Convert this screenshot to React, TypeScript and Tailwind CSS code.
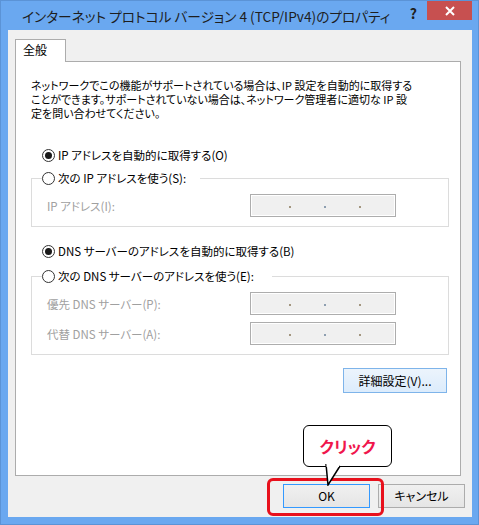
import type { ReactNode } from 'react';

const font = "font-['Noto_Sans_CJK_JP','Noto_Sans',sans-serif] [font-feature-settings:'palt']";

function Radio({ checked, children }: { checked?: boolean; children: ReactNode }) {
  return (
    <div className="flex h-[14px] items-center">
      <span className="flex h-[13px] w-[13px] items-center justify-center rounded-full border border-[#333] bg-white">
        {checked && <span className="h-[7px] w-[7px] rounded-full bg-[#1a1a1a]" />}
      </span>
      <span className="ml-[3px] whitespace-nowrap text-[11.5px] leading-[14px] text-black">{children}</span>
    </div>
  );
}

function IpBox() {
  return (
    <div className="relative h-[23px] w-[146px] border border-[#adadad] bg-[#f0f0f0] shadow-[inset_0_0_0_1px_#fff]">
      <div className="flex h-full items-center pl-[38px] pt-[2px]">
        <span className="h-[2px] w-[2px] bg-[#a39680]" />
        <span className="ml-[33px] h-[2px] w-[2px] bg-[#8d9eb0]" />
        <span className="ml-[33px] h-[2px] w-[2px] bg-[#a39680]" />
      </div>
    </div>
  );
}

function Field({ label }: { label: string }) {
  return (
    <div className="flex items-center pl-[15px]">
      <span className="w-[203px] whitespace-nowrap text-[11.5px] leading-[14px] text-[#a0a0a0]">{label}</span>
      <IpBox />
    </div>
  );
}

export default function App() {
  return (
    <div className={`relative h-[525px] w-[479px] overflow-hidden border border-[#5b93d6] bg-[#6aa8f0] ${font}`}>
      {/* title bar */}
      <div className="flex h-[29px] items-start">
        <span className="ml-[21px] mt-[6px] whitespace-nowrap text-[13.7px] leading-[18px] text-[#1e1e1e]">
          インターネット プロトコル バージョン 4 (TCP/IPv4)のプロパティ
        </span>
        <span className="ml-auto mr-[10px] mt-[4px] text-[14px] font-bold leading-[16px] text-[#202020]">?</span>
        <button type="button" className="mr-[6px] flex h-[19px] w-[45px] items-center justify-center bg-[#c75050] text-white">
          <svg width="10" height="10" viewBox="0 0 10 10">
            <path d="M1 1 L9 9 M9 1 L1 9" stroke="#fff" strokeWidth="2" />
          </svg>
        </button>
      </div>

      {/* client */}
      <div className="ml-[7px] h-[487px] w-[464px] bg-[#f0f0f0]">
        <div className="pl-[7px] pt-[9px]">
          <div className="relative z-10 -mb-px h-[23px] w-[51px] border border-b-0 border-[#acacac] bg-white pl-[7px] pt-[3px] text-[12px] leading-[14px] text-black">
            全般
          </div>
          <div className="h-[415px] w-[446px] border border-[#acacac] bg-white">
            <p className="pl-[15px] pt-[16px] text-[11px] leading-[14px] text-black whitespace-nowrap">
              ネットワークでこの機能がサポートされている場合は、IP 設定を自動的に取得する
              <br />
              ことができます。サポートされていない場合は、ネットワーク管理者に適切な IP 設
              <br />
              定を問い合わせてください。
            </p>

            <div className="ml-[26px] mt-[28px]">
              <Radio checked>IP アドレスを自動的に取得する(O)</Radio>
            </div>

            <fieldset className="ml-[15px] mt-[9px] h-[56px] w-[418px] border border-[#dcdcdc]">
              <legend className="ml-[10px] pr-[14px] bg-white">
                <Radio>次の IP アドレスを使う(S):</Radio>
              </legend>
              <div className="mt-[9px]">
                <Field label="IP アドレス(I):" />
              </div>
            </fieldset>

            <div className="ml-[26px] mt-[17px]">
              <Radio checked>DNS サーバーのアドレスを自動的に取得する(B)</Radio>
            </div>

            <fieldset className="ml-[15px] mt-[11px] h-[86px] w-[418px] border border-[#dcdcdc]">
              <legend className="ml-[10px] pr-[18px] bg-white">
                <Radio>次の DNS サーバーのアドレスを使う(E):</Radio>
              </legend>
              <div className="mt-[9px] flex flex-col gap-[7px]">
                <Field label="優先 DNS サーバー(P):" />
                <Field label="代替 DNS サーバー(A):" />
              </div>
            </fieldset>

            <div className="mr-[13px] mt-[13px] flex justify-end">
              <button
                type="button"
                className="h-[25px] w-[104px] border border-[#7eb4ea] bg-gradient-to-b from-[#ecf4fc] to-[#dcecfc] text-[12px] leading-[14px] text-black"
              >
                詳細設定(V)...
              </button>
            </div>
          </div>
        </div>

        <div className="mr-[7px] mt-[8px] flex justify-end gap-[8px]">
          <button
            type="button"
            className="h-[24px] w-[87px] border border-[#3399ff] bg-gradient-to-b from-[#f0f0f0] to-[#e5e5e5] text-[12px] leading-[14px] text-black"
          >
            OK
          </button>
          <button
            type="button"
            className="h-[24px] w-[87px] border border-[#acacac] bg-gradient-to-b from-[#f0f0f0] to-[#e5e5e5] text-[12px] leading-[14px] text-black"
          >
            キャンセル
          </button>
        </div>
      </div>

      {/* annotation: callout + highlight */}
      <div className="absolute left-[266px] top-[477px] h-[38px] w-[117px] rounded-[6px] border-[3px] border-[#e8101c]" />
      <div className="absolute left-[302px] top-[424px] flex h-[42px] w-[89px] items-center justify-center rounded-[6px] border-[1.5px] border-black bg-white">
        <span className="text-[16px] font-bold leading-[18px] text-[#f0164c]">クリック</span>
      </div>
      <svg className="absolute left-[320px] top-[463px]" width="24" height="22" viewBox="0 0 24 22">
        <path d="M5 0 L7 21 L19 2" fill="#fff" stroke="#000" strokeWidth="1.5" />
        <path d="M5.5 1.5 L18 1.5" stroke="#fff" strokeWidth="3" />
      </svg>
    </div>
  );
}
